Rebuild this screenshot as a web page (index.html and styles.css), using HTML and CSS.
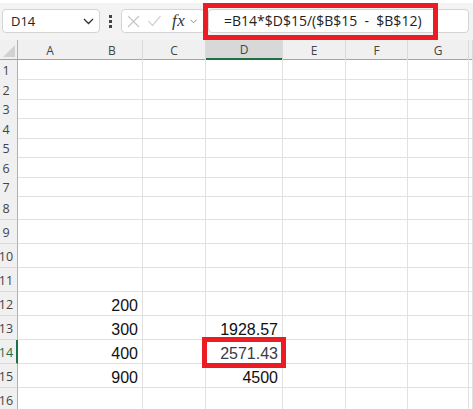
FILE: index.html
```html
<!DOCTYPE html>
<html>
<head>
<meta charset="utf-8">
<link rel="stylesheet" href="styles.css">
</head>
<body>
<div class="ribbon"></div>
<div class="topbar">
  <div class="namebox"><span>D14</span>
    <svg class="chev" width="11" height="7" viewBox="0 0 11 7"><polyline points="1,1 5.5,5.5 10,1" fill="none" stroke="#333" stroke-width="1.3"/></svg>
  </div>
  <div class="dots"><i></i><i></i><i></i></div>
  <div class="fxgroup">
    <svg class="x" width="13" height="13" viewBox="0 0 13 13"><path d="M1 1L12 12M12 1L1 12" stroke="#c4c4c4" stroke-width="1.1" fill="none"/></svg>
    <svg class="ok" width="13" height="12" viewBox="0 0 13 12"><polyline points="0.5,6 4.5,10.5 12.5,1" stroke="#c4c4c4" stroke-width="1.1" fill="none"/></svg>
    <span class="fx">fx</span>
    <svg class="chev2" width="7" height="5" viewBox="0 0 7 5"><polyline points="0.5,0.8 3.5,3.8 6.5,0.8" fill="none" stroke="#888" stroke-width="1"/></svg>
  </div>
  <div class="formula">=B14*$D$15/($B$15&nbsp;&nbsp;-&nbsp;&nbsp;$B$12)</div>
  <div class="hl"></div>
</div>
<div class="sheet">
  <div class="row hdr"><div class="corner"><span class="tri"></span></div><div class="a">A</div><div>B</div><div>C</div><div class="sel">D</div><div>E</div><div>F</div><div>G</div><div></div></div>
  <div class="row"><div class="rh">1</div><div class="a"></div><div></div><div></div><div></div><div></div><div></div><div></div><div></div></div>
  <div class="row"><div class="rh">2</div><div class="a"></div><div></div><div></div><div></div><div></div><div></div><div></div><div></div></div>
  <div class="row"><div class="rh">3</div><div class="a"></div><div></div><div></div><div></div><div></div><div></div><div></div><div></div></div>
  <div class="row"><div class="rh">4</div><div class="a"></div><div></div><div></div><div></div><div></div><div></div><div></div><div></div></div>
  <div class="row"><div class="rh">5</div><div class="a"></div><div></div><div></div><div></div><div></div><div></div><div></div><div></div></div>
  <div class="row"><div class="rh">6</div><div class="a"></div><div></div><div></div><div></div><div></div><div></div><div></div><div></div></div>
  <div class="row"><div class="rh">7</div><div class="a"></div><div></div><div></div><div></div><div></div><div></div><div></div><div></div></div>
  <div class="row t"><div class="rh">8</div><div class="a"></div><div></div><div></div><div></div><div></div><div></div><div></div><div></div></div>
  <div class="row t"><div class="rh">9</div><div class="a"></div><div></div><div></div><div></div><div></div><div></div><div></div><div></div></div>
  <div class="row t"><div class="rh">10</div><div class="a"></div><div></div><div></div><div></div><div></div><div></div><div></div><div></div></div>
  <div class="row t"><div class="rh">11</div><div class="a"></div><div></div><div></div><div></div><div></div><div></div><div></div><div></div></div>
  <div class="row t"><div class="rh">12</div><div class="a"></div><div class="v">200</div><div></div><div></div><div></div><div></div><div></div><div></div></div>
  <div class="row t"><div class="rh">13</div><div class="a"></div><div class="v">300</div><div></div><div class="v">1928.57</div><div></div><div></div><div></div><div></div></div>
  <div class="row t"><div class="rh cur">14</div><div class="a"></div><div class="v">400</div><div></div><div class="v active">2571.43<span class="box"></span></div><div></div><div></div><div></div><div></div></div>
  <div class="row t"><div class="rh">15</div><div class="a"></div><div class="v">900</div><div></div><div class="v">4500</div><div></div><div></div><div></div><div></div></div>
  <div class="row t"><div class="rh">16</div><div class="a"></div><div></div><div></div><div></div><div></div><div></div><div></div><div></div></div>
</div>
</body>
</html>
```
FILE: styles.css
```css
* { box-sizing: border-box; }
body {
  margin: 0;
  width: 473px;
  height: 409px;
  overflow: hidden;
  background: #fff;
  font-family: "Open Sans", "Noto Sans", sans-serif;
}
.ribbon {
  height: 3px;
  background: #fff;
  box-shadow: 0 1px 1px rgba(0,0,0,0.08);
  position: relative;
}
.topbar {
  height: 37px;
  background: #f3f3f3;
  display: flex;
  align-items: flex-start;
  padding-top: 6px;
  position: relative;
}
.namebox {
  margin-left: 2px;
  width: 98px;
  height: 24px;
  background: #fff;
  border: 1px solid #d4d4d4;
  border-radius: 4px;
  display: flex;
  align-items: center;
  justify-content: space-between;
  padding: 0 5px 0 8px;
  font-size: 13px;
  line-height: 22px;
  color: #222;
}
.dots {
  width: 21px;
  display: flex;
  flex-direction: column;
  align-items: center;
  gap: 2.5px;
  padding-top: 6px;
}
.dots i {
  display: block;
  width: 2.5px;
  height: 2.5px;
  background: #444;
}
.fxgroup {
  width: 84px;
  height: 24px;
  background: #fff;
  border: 1px solid #d4d4d4;
  border-radius: 4px;
  display: flex;
  align-items: center;
  padding-left: 5px;
}
.fxgroup .ok { margin-left: 8px; }
.fx {
  margin-left: 11px;
  font-family: "Liberation Serif", serif;
  font-style: italic;
  font-size: 17px;
  line-height: 20px;
  color: #333;
  letter-spacing: 0.5px;
}
.fxgroup .chev2 { margin-left: 5px; }
.formula {
  margin-left: 3px;
  margin-right: 4px;
  flex: 1;
  height: 24px;
  background: #fff;
  border: 1px solid #d4d4d4;
  border-radius: 4px;
  padding-left: 15px;
  font-size: 14px;
  line-height: 22px;
  color: #222;
  white-space: nowrap;
}
.hl {
  position: absolute;
  left: 203px;
  top: 0;
  width: 235px;
  height: 37px;
  border: 5px solid #ec1c24;
}
.sheet { background: #fff; }
.row {
  display: grid;
  grid-template-columns: 18px 64px 61px 63px 77px 63px 62px 61px 4px;
  height: 19.5px;
}
.row.t { height: 24px; }
.row > div {
  border-right: 1px solid #e1e1e1;
  border-bottom: 1px solid #e1e1e1;
}
.row > .a { border-right: none; }
.hdr { height: 19px; }
.hdr > div {
  background: #f0f0f0;
  border-right: 1px solid #dadada;
  border-bottom: 1px solid #a3a3a3;
  font-size: 12px;
  color: #444;
  display: flex;
  align-items: center;
  justify-content: center;
  padding-top: 1px;
}
.hdr > .a { border-right: none; }
.hdr > .sel {
  background: #d8d8d8;
  border-bottom: 2px solid #1e7145;
}
.hdr > .corner {
  position: relative;
  border-right: 1px solid #b0b0b0;
}
.tri {
  position: absolute;
  right: 2px;
  bottom: 2px;
  width: 12px;
  height: 12px;
  background: #d2d2d2;
  clip-path: polygon(100% 0, 100% 100%, 0 100%);
}
.row > .rh {
  background: #f0f0f0;
  border-right: 1px solid #b0b0b0;
  border-bottom: 1px solid #dadada;
  font-size: 12.5px;
  color: #444;
  display: flex;
  align-items: center;
  justify-content: center;
  padding: 3px 5px 0 0;
}
.row > .rh.cur {
  color: #1e7145;
  border-right: 2px solid #1e7145;
  padding-right: 4px;
}
.v {
  display: flex;
  justify-content: flex-end;
  align-items: flex-end;
  padding: 0 4px 0 0;
  font-family: "Liberation Sans", Arial, sans-serif;
  font-size: 16px;
  line-height: 18px;
  color: #111;
}
.v.active {
  position: relative;
  color: #3a3a44;
}
.box {
  position: absolute;
  left: -4px;
  top: -3px;
  width: 84px;
  height: 31px;
  border: 5px solid #ec1c24;
}
```
